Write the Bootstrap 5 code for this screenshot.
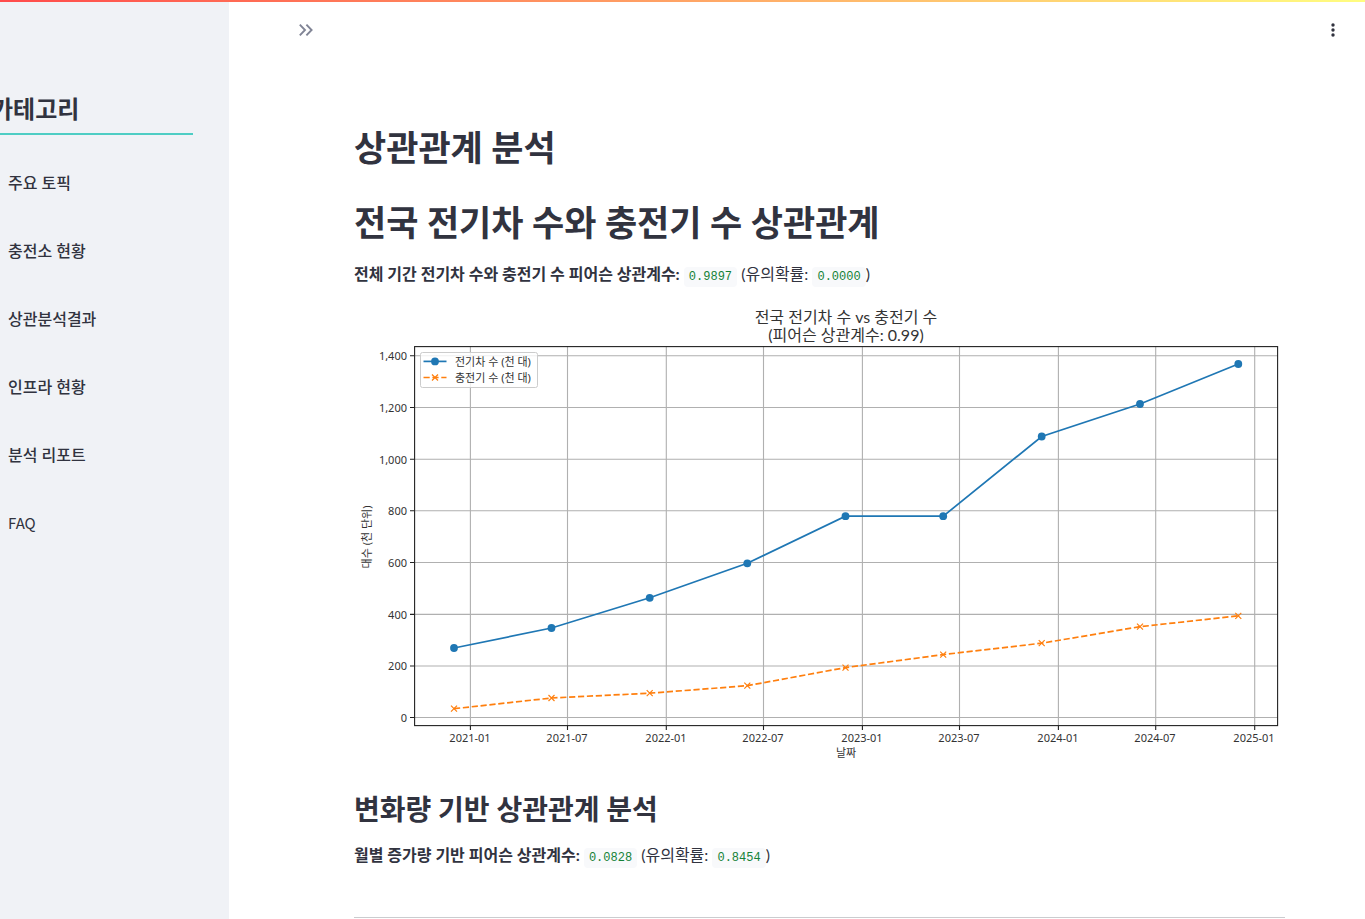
<!DOCTYPE html>
<html lang="ko">
<head>
<meta charset="utf-8">
<meta name="viewport" content="width=device-width, initial-scale=1">
<title>상관관계 분석</title>
<link href="https://cdn.jsdelivr.net/npm/bootstrap@5.3.0/dist/css/bootstrap.min.css" rel="stylesheet">
<style>
  body { font-family: Lato, "Noto Sans CJK KR", sans-serif; font-size: 16px; line-height: 26px; color: #31333f; }
  .top-stripe { height: 2px; background: linear-gradient(90deg, #ff4b4b, #fffd80); z-index: 5; }
  .side-panel { width: 229px; background: #f0f2f6; padding: 88px 36px 0 0; }
  .side-title { font-size: 24px; line-height: 32px; font-weight: 700; margin: 0 0 14px -9px; padding: 5px 0 8px; border-bottom: 2px solid #4ecdc4; }
  .side-panel .nav-link { color: #31333f; font-weight: 500; padding: 21px 8px; }
  .side-panel .nav-latin { font-family: "Noto Sans CJK KR", sans-serif; font-size: 15px; font-weight: 400; }
  .page-bar { height: 60px; padding: 0 22px 0 67px; }
  .icon-btn { border: 0; padding: 0; line-height: 1; color: #31333f; }
  .content { padding: 62px 80px 0 125px; }
  h1 { font-size: 35px; line-height: 43px; font-weight: 700; margin: 0; padding: 4px 0 28px; }
  .section-head { padding-bottom: 17px; }
  h2 { font-size: 28px; line-height: 34px; font-weight: 700; margin: 0; }
  .content p { margin: 0 0 14px; }
  .content code { font-family: "Liberation Mono", monospace; font-size: 12px; color: #158237; background: #f8f9fb; border-radius: 4px; padding: 3px 5px; }
  .plot { font-family: "Noto Sans", "Noto Sans CJK KR", sans-serif; font-size: 11px; fill: #333; }
  .plot-title { font-family: Lato, "Noto Sans CJK KR", sans-serif; font-size: 16px; }
  .content hr { border-color: #31333f; opacity: .25; margin: 46px 0 0; }
</style>
</head>
<body>
<div class="top-stripe fixed-top"></div>
<div class="d-flex min-vh-100">
  <aside class="side-panel flex-shrink-0 overflow-hidden">
    <h2 class="side-title">카테고리</h2>
    <nav class="nav flex-column" aria-label="카테고리">
      <a class="nav-link" href="#topic">주요 토픽</a>
      <a class="nav-link" href="#station">충전소 현황</a>
      <a class="nav-link" href="#result">상관분석결과</a>
      <a class="nav-link" href="#infra">인프라 현황</a>
      <a class="nav-link" href="#report">분석 리포트</a>
      <a class="nav-link nav-latin" href="#faq">FAQ</a>
    </nav>
  </aside>
  <main class="flex-grow-1">
    <div class="page-bar d-flex justify-content-between align-items-center">
      <button class="btn icon-btn" type="button" aria-label="사이드바 열기">
        <svg width="20" height="20" viewBox="0 0 20 20" fill="none" stroke="#808495" stroke-width="1.9"><path d="M3.8 4.7 9 10l-5.2 5.3M10.4 4.7l5.2 5.3-5.2 5.3"/></svg>
      </button>
      <button class="btn icon-btn" type="button" aria-label="메뉴">
        <svg width="20" height="20" viewBox="0 0 20 20" fill="currentColor"><circle cx="10" cy="5" r="1.7"/><circle cx="10" cy="10" r="1.7"/><circle cx="10" cy="15" r="1.7"/></svg>
      </button>
    </div>
    <div class="content">
      <h1>상관관계 분석</h1>
      <h1 class="section-head">전국 전기차 수와 충전기 수 상관관계</h1>
      <p><strong>전체 기간 전기차 수와 충전기 수 피어슨 상관계수:</strong> <code>0.9897</code> (유의확률: <code>0.0000</code>)</p>
      <svg class="plot d-block w-100" viewBox="354 304 931 464" role="img" aria-label="전국 전기차 수 vs 충전기 수">
        <g class="plot-title" text-anchor="middle">
          <text x="846" y="323">전국 전기차 수 vs 충전기 수</text>
          <text x="846" y="341">(피어슨 상관계수: 0.99)</text>
        </g>
        <path stroke="#b0b0b0" stroke-width="1.1" fill="none" d="M470.4 346V726M567.5 346V726M666.3 346V726M763.5 346V726M862.4 346V726M959.5 346V726M1058.4 346V726M1155.7 346V726M1254.7 346V726M414 355.8H1278M414 407.5H1278M414 459.3H1278M414 510.8H1278M414 562.5H1278M414 614.4H1278M414 666H1278M414 717.5H1278"/>
        <path stroke="#222" stroke-width="1.1" d="M470.4 726v4M567.5 726v4M666.3 726v4M763.5 726v4M862.4 726v4M959.5 726v4M1058.4 726v4M1155.7 726v4M1254.7 726v4M410 355.8h4M410 407.5h4M410 459.3h4M410 510.8h4M410 562.5h4M410 614.4h4M410 666h4M410 717.5h4"/>
        <polyline fill="none" stroke="#1f77b4" stroke-width="1.7" points="454,648 551.5,628 649.7,597.8 747.3,563.3 845.5,516.2 943.2,516.2 1041.7,436.5 1140,404 1238.3,364"/>
        <g fill="#1f77b4">
          <circle cx="454" cy="648" r="3.9"/><circle cx="551.5" cy="628" r="3.9"/><circle cx="649.7" cy="597.8" r="3.9"/><circle cx="747.3" cy="563.3" r="3.9"/><circle cx="845.5" cy="516.2" r="3.9"/><circle cx="943.2" cy="516.2" r="3.9"/><circle cx="1041.7" cy="436.5" r="3.9"/><circle cx="1140" cy="404" r="3.9"/><circle cx="1238.3" cy="364" r="3.9"/>
        </g>
        <polyline fill="none" stroke="#ff7f0e" stroke-width="1.7" stroke-dasharray="6.2 2.7" points="454,708.7 551.5,698 649.7,693.2 747.3,685.7 845.5,667.6 943.2,654.6 1041.7,643.2 1140,626.7 1238.3,615.8"/>
        <path stroke="#ff7f0e" stroke-width="1.2" d="M451 705.7l6 6m0-6l-6 6M548.5 695l6 6m0-6l-6 6M646.7 690.2l6 6m0-6l-6 6M744.3 682.7l6 6m0-6l-6 6M842.5 664.6l6 6m0-6l-6 6M940.2 651.6l6 6m0-6l-6 6M1038.7 640.2l6 6m0-6l-6 6M1137 623.7l6 6m0-6l-6 6M1235.3 612.8l6 6m0-6l-6 6"/>
        <rect x="414.6" y="346.6" width="863" height="379" fill="none" stroke="#222" stroke-width="1.1"/>
        <rect x="420.5" y="352.5" width="117" height="35" rx="2" fill="#fff" fill-opacity=".8" stroke="#ccc"/>
        <path d="M423.5 361.4h23" stroke="#1f77b4" stroke-width="1.7"/><circle cx="435" cy="361.4" r="3.9" fill="#1f77b4"/>
        <path d="M423.5 377.5h23" stroke="#ff7f0e" stroke-width="1.7" stroke-dasharray="6.2 2.7"/><path d="M432 374.5l6 6m0-6l-6 6" stroke="#ff7f0e" stroke-width="1.2"/>
        <text x="455" y="366">전기차 수 (천 대)</text>
        <text x="455" y="382">충전기 수 (천 대)</text>
        <g text-anchor="end">
          <text x="407" y="360">1,400</text><text x="407" y="412">1,200</text><text x="407" y="464">1,000</text><text x="407" y="515">800</text><text x="407" y="567">600</text><text x="407" y="619">400</text><text x="407" y="670">200</text><text x="407" y="722">0</text>
        </g>
        <g text-anchor="middle">
          <text x="470" y="742">2021-01</text><text x="567" y="742">2021-07</text><text x="666" y="742">2022-01</text><text x="763" y="742">2022-07</text><text x="862" y="742">2023-01</text><text x="959" y="742">2023-07</text><text x="1058" y="742">2024-01</text><text x="1155" y="742">2024-07</text><text x="1254" y="742">2025-01</text>
          <text x="846" y="757">날짜</text>
          <text transform="translate(371 537) rotate(-90)">대수 (천 단위)</text>
        </g>
      </svg>
      <h2 class="pt-4 pb-3">변화량 기반 상관관계 분석</h2>
      <p><strong>월별 증가량 기반 피어슨 상관계수:</strong> <code>0.0828</code> (유의확률: <code>0.8454</code>)</p>
      <hr>
    </div>
  </main>
</div>
<script src="https://cdn.jsdelivr.net/npm/bootstrap@5.3.0/dist/js/bootstrap.bundle.min.js"></script>
</body>
</html>
